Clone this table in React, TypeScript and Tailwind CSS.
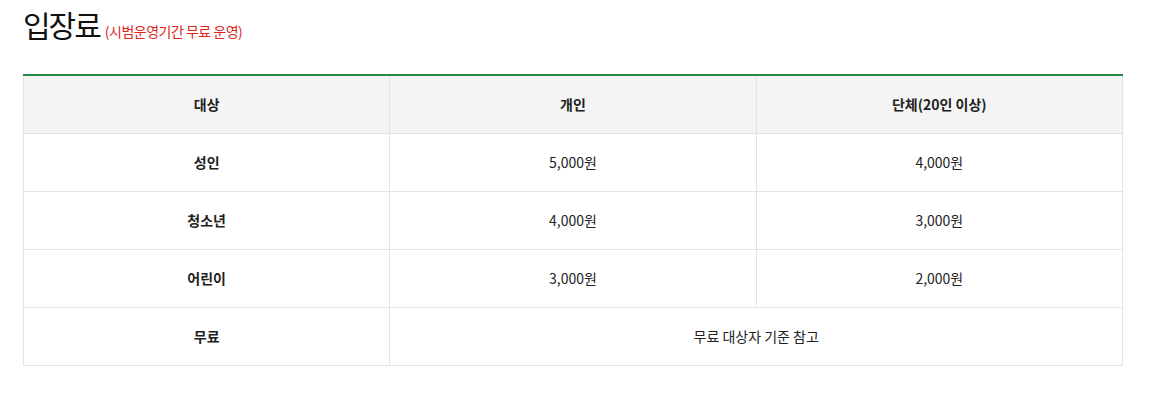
const ROWS = [
  { label: '성인', single: '5,000원', group: '4,000원' },
  { label: '청소년', single: '4,000원', group: '3,000원' },
  { label: '어린이', single: '3,000원', group: '2,000원' },
]

export default function App() {
  return (
    <div
      className="bg-white min-h-[395px] px-[23px] pt-[9px] text-[#222]"
      style={{ fontFamily: '"Noto Sans CJK KR", "Noto Sans", sans-serif' }}
    >
      <h2 className="flex items-end gap-[5px] leading-none">
        <span className="text-[30px] font-normal text-[#111] tracking-[-2px]">입장료</span>
        <span className="text-[14px] text-[#e0261c] mb-[1px] tracking-[-0.5px]">(시범운영기간 무료 운영)</span>
      </h2>

      <table className="mt-[35px] w-[1100px] border-collapse table-fixed border-t-2 border-t-[#2c8a48] text-[14px]">
        <thead>
          <tr className="bg-[#f4f4f4] h-[58px]">
            <th className="border border-[#e3e3e3] border-t-0 font-bold">대상</th>
            <th className="border border-[#e3e3e3] border-t-0 font-bold">개인</th>
            <th className="border border-[#e3e3e3] border-t-0 font-bold">단체(20인 이상)</th>
          </tr>
        </thead>
        <tbody>
          {ROWS.map((r) => (
            <tr key={r.label} className="h-[58px]">
              <th className="border border-[#e3e3e3] font-bold">{r.label}</th>
              <td className="border border-[#e3e3e3] text-center">{r.single}</td>
              <td className="border border-[#e3e3e3] text-center">{r.group}</td>
            </tr>
          ))}
          <tr className="h-[58px]">
            <th className="border border-[#e3e3e3] font-bold">무료</th>
            <td colSpan={2} className="border border-[#e3e3e3] text-center">
              무료 대상자 기준 참고
            </td>
          </tr>
        </tbody>
      </table>
    </div>
  )
}
